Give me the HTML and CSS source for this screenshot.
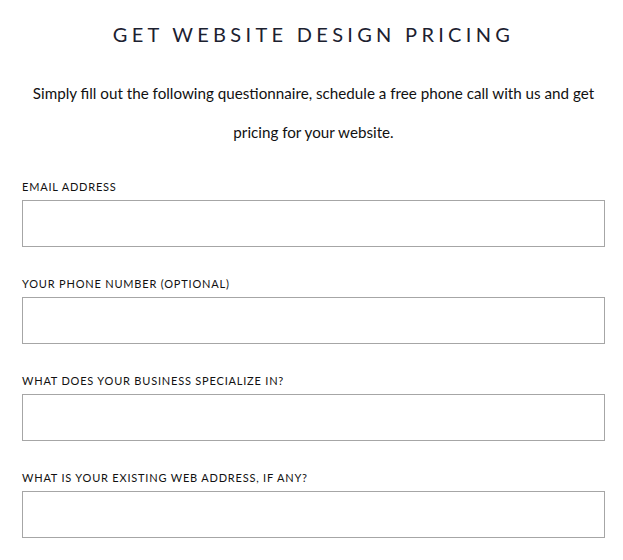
FILE: index.html
```html
<!DOCTYPE html>
<html>
<head>
<meta charset="utf-8">
<link rel="stylesheet" href="styles.css">
</head>
<body>
<div class="page">
  <h1 class="title">GET WEBSITE DESIGN PRICING</h1>
  <p class="intro">Simply fill out the following questionnaire, schedule a free phone call with us and get pricing for your website.</p>
  <form class="form">
    <div class="field">
      <label class="label">EMAIL ADDRESS</label>
      <input class="input" type="text">
    </div>
    <div class="field">
      <label class="label">YOUR PHONE NUMBER (OPTIONAL)</label>
      <input class="input" type="text">
    </div>
    <div class="field">
      <label class="label">WHAT DOES YOUR BUSINESS SPECIALIZE IN?</label>
      <input class="input" type="text">
    </div>
    <div class="field">
      <label class="label">WHAT IS YOUR EXISTING WEB ADDRESS, IF ANY?</label>
      <input class="input" type="text">
    </div>
  </form>
</div>
</body>
</html>
```
FILE: styles.css
```css
html, body {
  margin: 0;
  padding: 0;
  background: #fff;
}
body {
  font-family: Lato, "Noto Sans", sans-serif;
  color: #111;
}
.page {
  padding: 21px 18px 0 22px;
}
.title {
  margin: 0;
  text-align: center;
  font-weight: 400;
  font-size: 20px;
  letter-spacing: 4.3px;
  line-height: 26px;
  color: #1c2130;
}
.intro {
  margin: 27px 0 0;
  text-align: center;
  font-size: 15.2px;
  line-height: 39px;
  color: #111;
}
.form {
  margin-top: 28px;
  display: flex;
  flex-direction: column;
  gap: 30px;
}
.field {
  display: flex;
  flex-direction: column;
  gap: 7px;
}
.label {
  font-size: 11px;
  letter-spacing: 0.8px;
  line-height: 13px;
  color: #111;
}
.input {
  box-sizing: border-box;
  width: 583px;
  height: 47px;
  margin: 0;
  border: 1px solid #a6a6a6;
  border-radius: 0;
  background: #fff;
  outline: none;
}
```
